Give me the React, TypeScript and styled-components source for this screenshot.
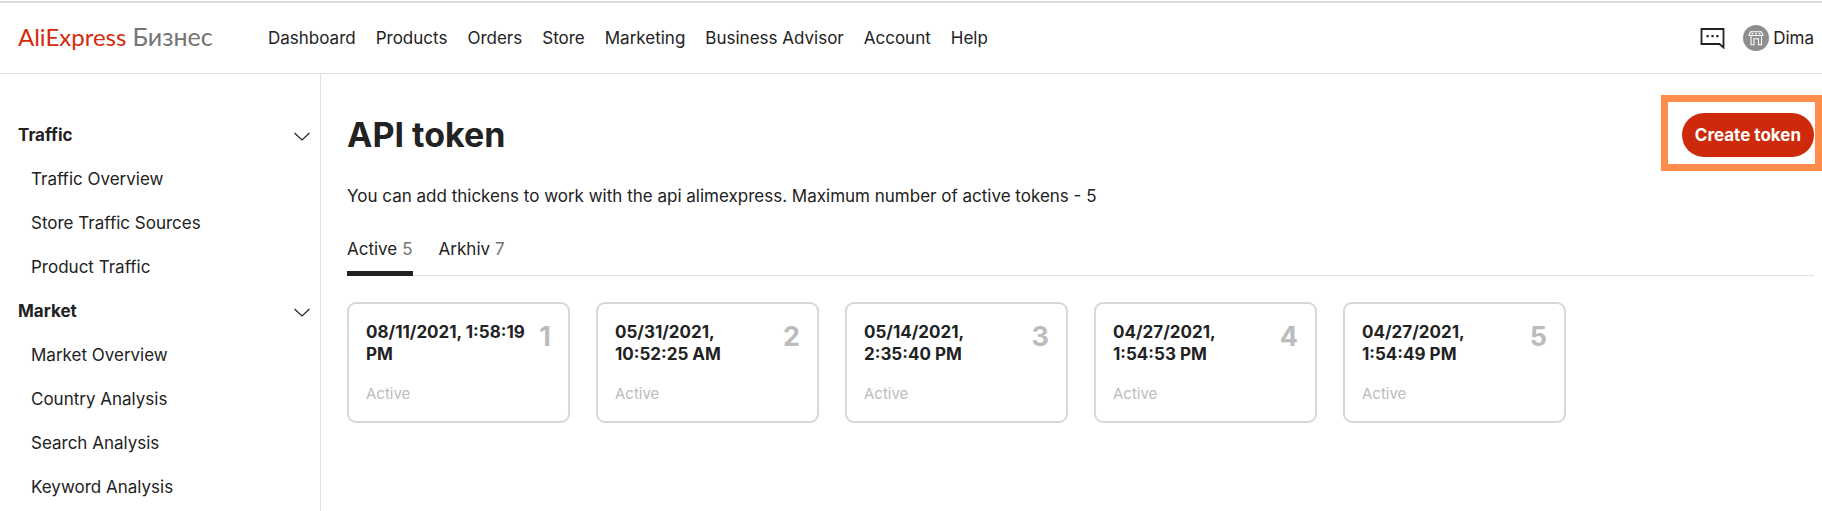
import React from "react";
import styled, { createGlobalStyle, css } from "styled-components";

const GlobalStyle = createGlobalStyle`
  *, *::before, *::after { box-sizing: border-box; }
  body {
    margin: 0;
    background: #fff;
    color: #222;
    font: 400 17px/22px Inter, "Liberation Sans", sans-serif;
  }
  a { color: inherit; text-decoration: none; }
  button { font: inherit; color: inherit; border: 0; background: none; padding: 0; cursor: pointer; }
  h1, h2, p, ul { margin: 0; padding: 0; }
  ul { list-style: none; }
`;

const Page = styled.div`
  display: flex;
  flex-direction: column;
  height: 100vh;
  padding-top: 1px;
  overflow: hidden;
`;

const Header = styled.header`
  display: flex;
  flex: none;
  align-items: center;
  height: 73px;
  padding: 0 8px 0 18px;
  border-top: 2px solid #dcdedd;
  border-bottom: 1px solid #e2e2e2;
`;

const Logo = styled.a`
  width: 250px;
  padding-bottom: 3px;
  color: #d52b0d;
  font: 400 24px/30px Lato, sans-serif;
  white-space: nowrap;
`;

const LogoSuffix = styled.span`
  color: #757575;
  font-size: 25px;
`;

const Nav = styled.nav`
  display: flex;
  flex: 1;
  gap: 20px;
  white-space: nowrap;
`;

const Account = styled.div`
  display: flex;
  align-items: center;
  gap: 18px;
`;

const IconButton = styled.button`
  display: flex;
`;

const Profile = styled.a`
  display: flex;
  align-items: center;
  gap: 4px;
`;

const Body = styled.div`
  display: flex;
  flex: 1;
  min-height: 0;
`;

const Sidebar = styled.aside`
  flex: none;
  width: 321px;
  padding: 39px 8px 0 18px;
  border-right: 1px solid #e2e2e2;
  overflow: hidden;
`;

const GroupToggle = styled.button`
  display: flex;
  align-items: center;
  justify-content: space-between;
  width: 100%;
  height: 44px;
  font-weight: 700;
`;

const SideLink = styled.a`
  display: flex;
  align-items: center;
  height: 44px;
  padding-left: 13px;
`;

const Main = styled.main`
  flex: 1;
  min-width: 0;
  padding: 39px 8px 0 26px;
`;

const TitleRow = styled.div`
  display: flex;
  align-items: center;
  justify-content: space-between;
  height: 44px;
`;

const Title = styled.h1`
  font-size: 34px;
  line-height: 44px;
  font-weight: 700;
`;

const Highlight = styled.div`
  position: relative;
  &::after {
    content: "";
    position: absolute;
    inset: -18px -8px -14px -21px;
    border: 7px solid #ff8c4b;
    pointer-events: none;
  }
`;

const CreateButton = styled.button`
  height: 44px;
  padding: 0 13px;
  border-radius: 22px;
  background: #cc2a0a;
  color: #fff;
  font-weight: 700;
  white-space: nowrap;
`;

const Description = styled.p`
  margin-top: 28px;
`;

const Tabs = styled.div`
  display: flex;
  gap: 26px;
  height: 38px;
  margin-top: 31px;
  border-bottom: 1px solid #e2e2e2;
`;

const Tab = styled.button<{ $active?: boolean }>`
  display: flex;
  align-items: flex-start;
  gap: 5px;
  height: 38px;
  ${(p) => p.$active && css`border-bottom: 5px solid #222;`}
`;

const TabCount = styled.span`
  color: #757575;
`;

const Cards = styled.ul`
  display: grid;
  grid-template-columns: repeat(auto-fill, 223px);
  gap: 26px;
  margin-top: 26px;
`;

const Card = styled.li`
  display: flex;
  justify-content: space-between;
  height: 121px;
  padding: 17px;
  border: 2px solid #d7d7d7;
  border-radius: 9px;
`;

const CardDate = styled.h2`
  font-size: 17px;
  line-height: 22px;
  font-weight: 700;
`;

const CardStatus = styled.p`
  margin-top: 18px;
  color: #bcbcbc;
  font-size: 15px;
`;

const CardNumber = styled.span`
  color: #bcbcbc;
  font-size: 27px;
  line-height: 32px;
  font-weight: 700;
`;

const nav = ["Dashboard", "Products", "Orders", "Store", "Marketing", "Business Advisor", "Account", "Help"];

const groups = [
  { title: "Traffic", links: ["Traffic Overview", "Store Traffic Sources", "Product Traffic"] },
  { title: "Market", links: ["Market Overview", "Country Analysis", "Search Analysis", "Keyword Analysis"] },
];

const tokens = [
  "08/11/2021, 1:58:19 PM",
  "05/31/2021, 10:52:25 AM",
  "05/14/2021, 2:35:40 PM",
  "04/27/2021, 1:54:53 PM",
  "04/27/2021, 1:54:49 PM",
];

const MessageIcon = () => (
  <svg width="25" height="22" viewBox="0 0 25 22" fill="none" stroke="#222" strokeWidth="1.8">
    <path d="M1.500 2H23.500V20.500L19.500 17H1.500Z" />
    <path d="M6.500 9.200h2.200M11.400 9.200h2.200M16.300 9.200h2.200" strokeWidth="2.2" />
  </svg>
);

const StoreIcon = () => (
  <svg width="26" height="26" viewBox="0 0 26 26" fill="none" stroke="#fff" strokeWidth="1.1">
    <circle cx="13" cy="13" r="13" fill="#8e8e8e" stroke="none" />
    <path d="M7.500 6.700h11l1.500 3.800H6z" />
    <path d="M8.500 8.600h9" strokeDasharray="1.800 1.800" />
    <path d="M8 11v8.700h3v-6h4.500v6h3V11" />
  </svg>
);

const Chevron = () => (
  <svg width="18" height="14" viewBox="0 0 18 14" fill="none" stroke="#222" strokeWidth="1.200">
    <path d="M.5 5L8 12L15.500 5" />
  </svg>
);

export default function App() {
  return (
    <Page>
      <GlobalStyle />
      <Header>
        <Logo href="#">AliExpress <LogoSuffix>Бизнес</LogoSuffix></Logo>
        <Nav>{nav.map((n) => <a key={n} href="#">{n}</a>)}</Nav>
        <Account>
          <IconButton aria-label="Messages"><MessageIcon /></IconButton>
          <Profile href="#"><StoreIcon />Dima</Profile>
        </Account>
      </Header>
      <Body>
        <Sidebar>
          {groups.map((g) => (
            <section key={g.title}>
              <GroupToggle>{g.title}<Chevron /></GroupToggle>
              {g.links.map((l) => <SideLink key={l} href="#">{l}</SideLink>)}
            </section>
          ))}
        </Sidebar>
        <Main>
          <TitleRow>
            <Title>API token</Title>
            <Highlight><CreateButton>Create token</CreateButton></Highlight>
          </TitleRow>
          <Description>
            You can add thickens to work with the api alimexpress. Maximum number of active tokens - 5
          </Description>
          <Tabs role="tablist">
            <Tab role="tab" aria-selected $active>Active <TabCount>5</TabCount></Tab>
            <Tab role="tab" aria-selected={false}>Arkhiv <TabCount>7</TabCount></Tab>
          </Tabs>
          <Cards>
            {tokens.map((t, i) => (
              <Card key={i}>
                <div>
                  <CardDate>{t}</CardDate>
                  <CardStatus>Active</CardStatus>
                </div>
                <CardNumber>{i + 1}</CardNumber>
              </Card>
            ))}
          </Cards>
        </Main>
      </Body>
    </Page>
  );
}
